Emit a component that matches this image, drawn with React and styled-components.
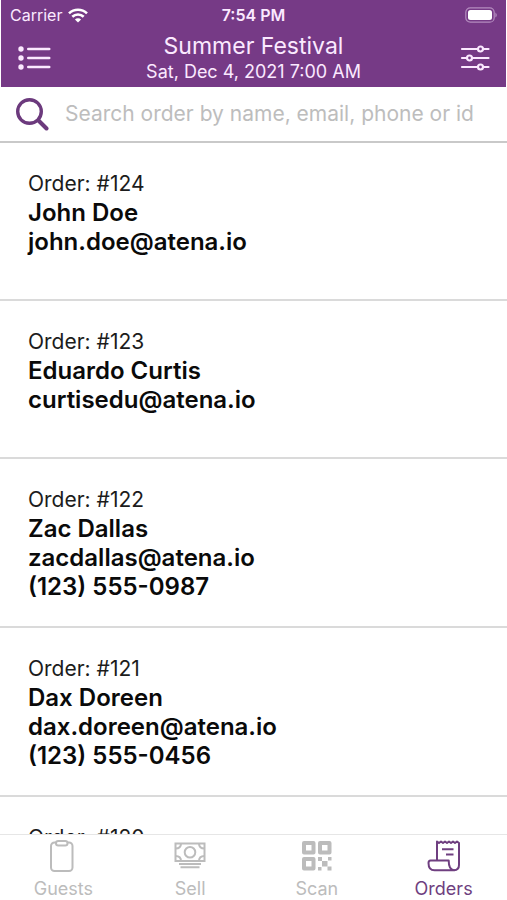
import React, { useState } from 'react'
import styled, { createGlobalStyle } from 'styled-components'

let GlobalStyle = createGlobalStyle`
  * {
    box-sizing: border-box;
  }
  body {
    margin: 0;
    background-color: #fff;
    font-family: Inter, 'Liberation Sans', sans-serif;
    color: #0a0a0a;
  }
`
let Screen = styled.div`
  height: 100vh;
  display: flex;
  flex-direction: column;
  overflow: hidden;
`
let TopArea = styled.header`
  margin: 0 1px;
  background-color: #763a86;
  color: #fbe9ff;
`
let StatusBar = styled.div`
  display: grid;
  grid-template-columns: 1fr auto 1fr;
  align-items: center;
  height: 30px;
  padding: 0 9px;
  font-size: 16px;
`
let Carrier = styled.div`
  display: flex;
  align-items: center;
  gap: 6px;
`
let Clock = styled.div`
  font-weight: 600;
`
let Battery = styled.div`
  display: flex;
  justify-content: flex-end;
`
let NavBar = styled.div`
  display: flex;
  justify-content: space-between;
  align-items: center;
  height: 57px;
  padding: 0 16px 2px;
`
let NavButton = styled.button`
  display: flex;
  justify-content: flex-end;
  width: 34px;
  padding: 0;
  border: 0;
  background: none;
  color: inherit;
`
let Heading = styled.div`
  text-align: center;
`
let Title = styled.h1`
  margin: 0;
  font-size: 23px;
  font-weight: 400;
  line-height: 28px;
`
let EventDate = styled.div`
  font-size: 18px;
  line-height: 24px;
`
let SearchBar = styled.label`
  display: flex;
  align-items: center;
  gap: 16px;
  height: 56px;
  padding: 0 16px 1px 15px;
  border-bottom: 2px solid #c9c9c9;
  flex-shrink: 0;
`
let SearchInput = styled.input`
  flex: 1;
  min-width: 0;
  padding: 0;
  border: 0;
  outline: 0;
  font-family: inherit;
  font-size: 21px;
  color: #0a0a0a;

  &::placeholder {
    color: #bdbdbd;
    opacity: 1;
  }
`
let OrderList = styled.ul`
  flex: 1;
  min-height: 0;
  margin: 0;
  padding: 0;
  list-style: none;
  overflow: hidden;
`
let OrderRow = styled.li`
  min-height: 158px;
  padding: 27px 28px 25px;
  border-bottom: 2px solid #dadada;
`
let OrderNumber = styled.div`
  font-size: 21px;
  line-height: 28px;
  color: #1c1c1c;
`
let OrderDetail = styled.div`
  font-size: 24px;
  font-weight: 600;
  line-height: 29px;
`
let TabBar = styled.nav`
  display: grid;
  grid-template-columns: repeat(4, 1fr);
  height: 66px;
  border-top: 1px solid #e6e6e6;
  background-color: #fff;
  flex-shrink: 0;
`
let TabButton = styled.button`
  display: flex;
  flex-direction: column;
  align-items: center;
  gap: 4px;
  padding: 4px 0 0;
  border: 0;
  background: none;
  font-family: inherit;
  font-size: 18px;
  line-height: 24px;
  color: ${props => (props.$active ? '#6f3f80' : '#bcbcbc')};
`

const WifiIcon = () => (
  <svg width="20" height="15" viewBox="0 0 20 15" fill="none" stroke="#fff" strokeWidth="2.6">
    <path d="M1 5.4a13 13 0 0 1 18 0" />
    <path d="M4.3 8.8a8.2 8.2 0 0 1 11.4 0" />
    <path d="M10 14.6 6.9 11.5a4.4 4.4 0 0 1 6.2 0z" fill="#fff" stroke="none" />
  </svg>
)

const BatteryIcon = () => (
  <svg width="32" height="16" viewBox="0 0 32 16">
    <rect x="0.8" y="0.8" width="28.4" height="14.4" rx="4.5" fill="none" stroke="#b48cbf" strokeWidth="1.2" />
    <rect x="3" y="3" width="24" height="10" rx="2.5" fill="#fff" />
    <path d="M30.4 5.5q1.4 1 1.4 2.5t-1.4 2.5z" fill="#b48cbf" />
  </svg>
)

const MenuIcon = () => (
  <svg width="34" height="24" viewBox="0 0 34 24" fill="currentColor">
    {[3, 12, 21].map(y => (
      <g key={y}>
        <circle cx="4" cy={y} r="2.7" />
        <rect x="10" y={y - 1.3} width="23.5" height="2.6" rx="1.3" />
      </g>
    ))}
  </svg>
)

const FilterIcon = () => (
  <svg width="30" height="26" viewBox="0 0 30 26" fill="none" stroke="currentColor" strokeWidth="2.2" strokeLinecap="round">
    <path d="M2 4h15.5M23 4h5.5M2 13h5M12.5 13h16M2 22h15.5M23 22h5.5" />
    <circle cx="20.5" cy="4" r="2.5" />
    <circle cx="9.5" cy="13" r="2.5" />
    <circle cx="20.5" cy="22" r="2.5" />
  </svg>
)

const SearchIcon = () => (
  <svg width="34" height="34" viewBox="0 0 34 34" fill="none" stroke="#6c3a7d">
    <circle cx="14.5" cy="14.5" r="11.8" strokeWidth="3.4" />
    <path d="M23.5 23.5l8 8" strokeWidth="4" strokeLinecap="round" />
  </svg>
)

const GuestsIcon = () => (
  <svg width="34" height="34" viewBox="0 0 34 34" fill="none" stroke="currentColor" strokeWidth="2">
    <path d="M10 3.500H8.500a3.500 3.500 0 0 0-3.500 3.500v21.500a3.500 3.500 0 0 0 3.500 3.500h14.500a3.500 3.500 0 0 0 3.500-3.500V7a3.500 3.500 0 0 0-3.500-3.500H21.500" />
    <rect x="10" y="2" width="11.5" height="4.5" rx="2.2" />
  </svg>
)

const SellIcon = () => (
  <svg width="34" height="34" viewBox="0 0 34 34" fill="none" stroke="currentColor" strokeWidth="2">
    <rect x="2.5" y="4.5" width="29" height="17.5" />
    <circle cx="17" cy="13.2" r="5.3" />
    <path d="M8 4.5q0 5-5.500 5M26 4.5q0 5 5.500 5M8 22q0-5-5.500-5M26 22q0-5 5.500-5" />
    <path d="M6 25h22M7.500 28.200h19" />
  </svg>
)

const ScanIcon = () => (
  <svg width="34" height="34" viewBox="0 0 34 34" fill="currentColor">
    <g fill="none" stroke="currentColor" strokeWidth="4" strokeLinejoin="round">
      <rect x="4" y="4" width="9.5" height="9.5" />
      <rect x="20" y="4" width="9.5" height="9.5" />
      <rect x="4" y="20" width="9.5" height="9.5" />
    </g>
    <rect x="18" y="18" width="4" height="4" />
    <rect x="28" y="18" width="3.5" height="3.5" />
    <rect x="22" y="22" width="5.5" height="5.5" />
    <rect x="18" y="28" width="3.5" height="3.5" />
    <rect x="27.5" y="27.5" width="4" height="4" />
  </svg>
)

const OrdersIcon = () => (
  <svg width="34" height="34" viewBox="0 0 34 34" fill="none" stroke="currentColor" strokeWidth="2" strokeLinejoin="round">
    <path d="M10 21.5V2.5l2 1.5 2-1.5 2 1.5 2-1.5 2 1.500 2-1.500 2 1.500 2-1.500 2 1.500 2-1.500 2 1.500V26q0 5-5 5.300" />
    <path d="M27 31.3q-5.300-.500-5.300-9.800H3.500q-2 0-2 2.500 0 7.300 6 7.300z" />
    <path d="M15 10.2h11.500M19 15.500h7.500" />
  </svg>
)

const orders = [
  { number: 124, details: ['John Doe', 'john.doe@atena.io'] },
  { number: 123, details: ['Eduardo Curtis', 'curtisedu@atena.io'] },
  { number: 122, details: ['Zac Dallas', 'zacdallas@atena.io', '(123) 555-0987'] },
  { number: 121, details: ['Dax Doreen', 'dax.doreen@atena.io', '(123) 555-0456'] },
  { number: 120, details: [] }
]

const tabs = [
  { label: 'Guests', Icon: GuestsIcon },
  { label: 'Sell', Icon: SellIcon },
  { label: 'Scan', Icon: ScanIcon },
  { label: 'Orders', Icon: OrdersIcon }
]

const App = () => {
  const [query, setQuery] = useState('')
  const [tab, setTab] = useState('Orders')

  return (
    <Screen>
      <GlobalStyle />
      <TopArea>
        <StatusBar>
          <Carrier>
            Carrier
            <WifiIcon />
          </Carrier>
          <Clock>7:54 PM</Clock>
          <Battery>
            <BatteryIcon />
          </Battery>
        </StatusBar>
        <NavBar>
          <NavButton aria-label="Menu">
            <MenuIcon />
          </NavButton>
          <Heading>
            <Title>Summer Festival</Title>
            <EventDate>Sat, Dec 4, 2021 7:00 AM</EventDate>
          </Heading>
          <NavButton aria-label="Filters">
            <FilterIcon />
          </NavButton>
        </NavBar>
      </TopArea>
      <SearchBar>
        <SearchIcon />
        <SearchInput
          type="text"
          aria-label="Search orders"
          placeholder="Search order by name, email, phone or id"
          value={query}
          onChange={e => setQuery(e.target.value)}
        />
      </SearchBar>
      <OrderList>
        {orders.map(({ number, details }) => (
          <OrderRow key={number}>
            <OrderNumber>Order: #{number}</OrderNumber>
            {details.map(detail => (
              <OrderDetail key={detail}>{detail}</OrderDetail>
            ))}
          </OrderRow>
        ))}
      </OrderList>
      <TabBar>
        {tabs.map(({ label, Icon }) => (
          <TabButton key={label} $active={label === tab} onClick={() => setTab(label)}>
            <Icon />
            {label}
          </TabButton>
        ))}
      </TabBar>
    </Screen>
  )
}

export default App
